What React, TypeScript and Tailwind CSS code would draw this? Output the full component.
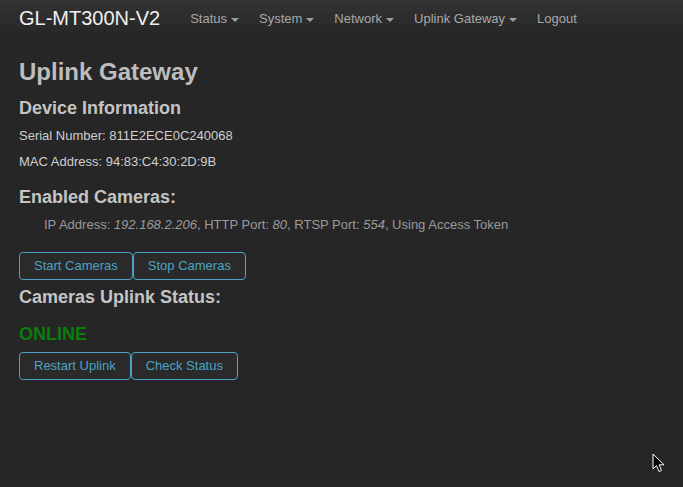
import React from "react";

const navItems = [
  { label: "Status", caret: true },
  { label: "System", caret: true },
  { label: "Network", caret: true },
  { label: "Uplink Gateway", caret: true },
  { label: "Logout", caret: false },
];

function Caret() {
  return (
    <span className="inline-block ml-[4px] w-0 h-0 align-middle border-t-[4px] border-t-[#9d9d9d] border-x-[4px] border-x-transparent" />
  );
}

function Btn({ children }: { children: React.ReactNode }) {
  return (
    <button className="px-[14px] py-[4px] leading-[18px] text-[13px] text-[#4ba3c4] bg-[#2a2a2a] border border-[#4ba3c4] rounded-[4px]">
      {children}
    </button>
  );
}

export default function App() {
  return (
    <div className="relative min-h-[487px] bg-[#262626] font-['Liberation_Sans',Arial,sans-serif] text-[13px] text-[#cfcfcf]">
      {/* top navbar */}
      <div className="h-[37px] flex items-center bg-gradient-to-b from-[#333333] to-[#262626] px-[19px]">
        <span className="text-[20px] leading-[37px] text-[#f0f0f0] mr-[20px]">GL-MT300N-V2</span>
        <nav className="flex">
          {navItems.map((n) => (
            <span key={n.label} className="px-[10px] leading-[37px] text-[13px] text-[#a8a8a8]">
              {n.label}
              {n.caret && <Caret />}
            </span>
          ))}
        </nav>
      </div>

      <div className="px-[19px] pt-[22px]">
        <h1 className="text-[24px] leading-[26.4px] font-bold text-[#bdbdbd]">Uplink Gateway</h1>

        <h2 className="mt-[14px] text-[18px] leading-[19.8px] font-bold text-[#c4c4c4]">Device Information</h2>
        <p className="mt-[8px] leading-[18.57px]">Serial Number: 811E2ECE0C240068</p>
        <p className="mt-[7px] leading-[18.57px]">MAC Address: 94:83:C4:30:2D:9B</p>

        <h2 className="mt-[17px] text-[18px] leading-[19.8px] font-bold text-[#c4c4c4]">Enabled Cameras:</h2>
        <p className="mt-[7.5px] pl-[25px] leading-[18.57px] text-[#9a9a9a]">
          IP Address: <i>192.168.2.206</i>, HTTP Port: <i>80</i>, RTSP Port: <i>554</i>, Using Access Token
        </p>

        <div className="mt-[18px] flex">
          <Btn>Start Cameras</Btn>
          <Btn>Stop Cameras</Btn>
        </div>

        <h2 className="mt-[8px] text-[18px] leading-[19.8px] font-bold text-[#c4c4c4]">Cameras Uplink Status:</h2>
        <div className="mt-[17px] text-[18px] leading-[19.8px] font-bold text-[#0b7d0b]">ONLINE</div>

        <div className="mt-[7px] flex">
          <Btn>Restart Uplink</Btn>
          <Btn>Check Status</Btn>
        </div>
      </div>

      {/* mouse pointer captured in the screenshot */}
      <svg className="absolute left-[652px] top-[453px]" width="14" height="21" viewBox="0 0 14 21">
        <path d="M1 1 L1 16 L4.5 12.5 L7 18.5 L9.5 17.5 L7 11.8 L12 11.8 Z" fill="#000" stroke="#fff" strokeWidth="1" />
      </svg>
    </div>
  );
}
